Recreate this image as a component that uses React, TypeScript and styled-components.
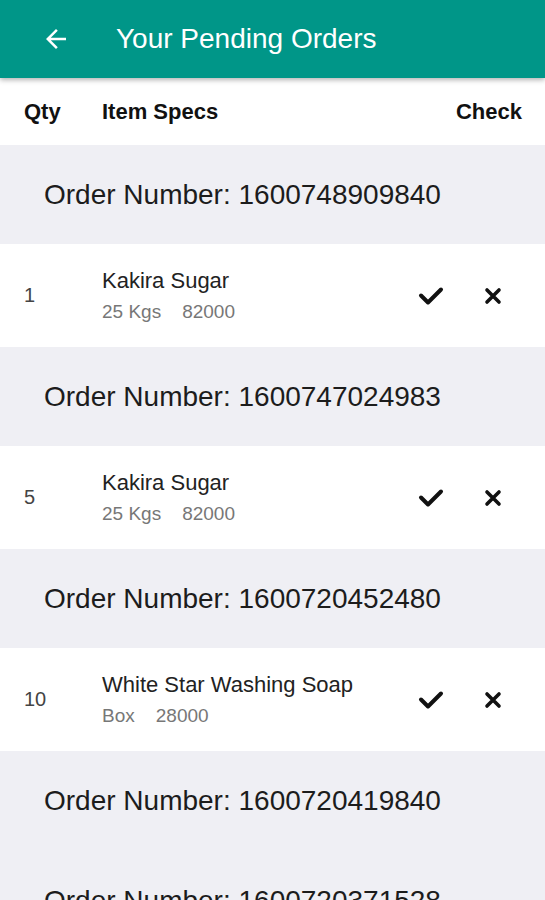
import styled, { createGlobalStyle } from "styled-components";

const GlobalStyle = createGlobalStyle`
    body {
        margin: 0;
        font-family: "Liberation Sans", Arial, sans-serif;
        background: #efeff4;
        overflow: hidden;
    }
`

const Page = styled.div`
    width: 545px;
    height: 900px;
    overflow: hidden;
    background: #efeff4;
`

const AppBar = styled.div`
    height: 78px;
    background: #009688;
    display: flex;
    align-items: center;
    padding-left: 41px;
    gap: 45px;
    box-shadow: 0 2px 5px rgba(0, 0, 0, 0.3);
    position: relative;
    z-index: 1;
`

const Title = styled.h1`
    margin: 0;
    color: #fff;
    font-size: 28px;
    font-weight: 400;
`

const ColumnHead = styled.div`
    height: 67px;
    background: #fff;
    display: flex;
    align-items: center;
    padding: 0 23px 0 24px;
    font-size: 22px;
    font-weight: 700;
    color: #111;
`

const HeadQty = styled.span`
    width: 78px;
`

const HeadSpecs = styled.span`
    flex: 1;
`

const OrderHeader = styled.div<{ $height: number }>`
    height: ${p => p.$height}px;
    display: flex;
    align-items: center;
    padding-left: 44px;
    font-size: 28px;
    color: #1c1c1c;
`

const ItemRow = styled.div`
    height: 103px;
    background: #fff;
    display: flex;
    align-items: center;
    padding: 0 24px;
`

const Qty = styled.span`
    width: 78px;
    font-size: 20px;
    color: #444;
`

const Specs = styled.div`
    flex: 1;
    display: flex;
    flex-direction: column;
    gap: 7px;
`

const ItemName = styled.span`
    font-size: 22px;
    color: #222;
`

const SubLine = styled.div`
    display: flex;
    gap: 21px;
    font-size: 19px;
    color: #777;
`

const Actions = styled.div`
    display: flex;
    align-items: center;
    gap: 40px;
    margin-right: 19px;
`

const IconButton = styled.button`
    border: none;
    background: none;
    padding: 0;
    display: flex;
    cursor: pointer;
`

interface Item {
    qty: number;
    name: string;
    unit: string;
    price: number;
}

interface Order {
    id: string;
    items: Array<Item>;
}

const orders: Array<Order> = [
    { id: "1600748909840", items: [{ qty: 1, name: "Kakira Sugar", unit: "25 Kgs", price: 82000 }] },
    { id: "1600747024983", items: [{ qty: 5, name: "Kakira Sugar", unit: "25 Kgs", price: 82000 }] },
    { id: "1600720452480", items: [{ qty: 10, name: "White Star Washing Soap", unit: "Box", price: 28000 }] },
    { id: "1600720419840", items: [] },
    { id: "1600720371528", items: [] },
]

const CheckIcon = () => (
    <svg width="26" height="20" viewBox="0 0 26 20">
        <polyline points="3,9.5 10,16.5 23,3.5" fill="none" stroke="#111" strokeWidth="4" strokeLinecap="round" strokeLinejoin="round" />
    </svg>
)

const CloseIcon = () => (
    <svg width="18" height="18" viewBox="0 0 18 18">
        <path d="M3 3L15 15M15 3L3 15" fill="none" stroke="#111" strokeWidth="3.6" strokeLinecap="round" />
    </svg>
)

const App = () => {
    return (
        <>
        <GlobalStyle />
        <Page>
            <AppBar>
                <svg width="30" height="30" viewBox="0 0 24 24">
                    <path d="M20 11H7.83l5.59-5.59L12 4l-8 8 8 8 1.41-1.41L7.83 13H20v-2z" fill="#fff" />
                </svg>
                <Title>Your Pending Orders</Title>
            </AppBar>
            <ColumnHead>
                <HeadQty>Qty</HeadQty>
                <HeadSpecs>Item Specs</HeadSpecs>
                <span>Check</span>
            </ColumnHead>
            {orders.map((order) => (
                <div key={order.id}>
                    <OrderHeader $height={order.items.length ? 99 : 100}>Order Number: {order.id}</OrderHeader>
                    {order.items.map((item, i) => (
                        <ItemRow key={i}>
                            <Qty>{item.qty}</Qty>
                            <Specs>
                                <ItemName>{item.name}</ItemName>
                                <SubLine>
                                    <span>{item.unit}</span>
                                    <span>{item.price}</span>
                                </SubLine>
                            </Specs>
                            <Actions>
                                <IconButton><CheckIcon /></IconButton>
                                <IconButton><CloseIcon /></IconButton>
                            </Actions>
                        </ItemRow>
                    ))}
                </div>
            ))}
        </Page>
        </>
    )
}

export default App;
